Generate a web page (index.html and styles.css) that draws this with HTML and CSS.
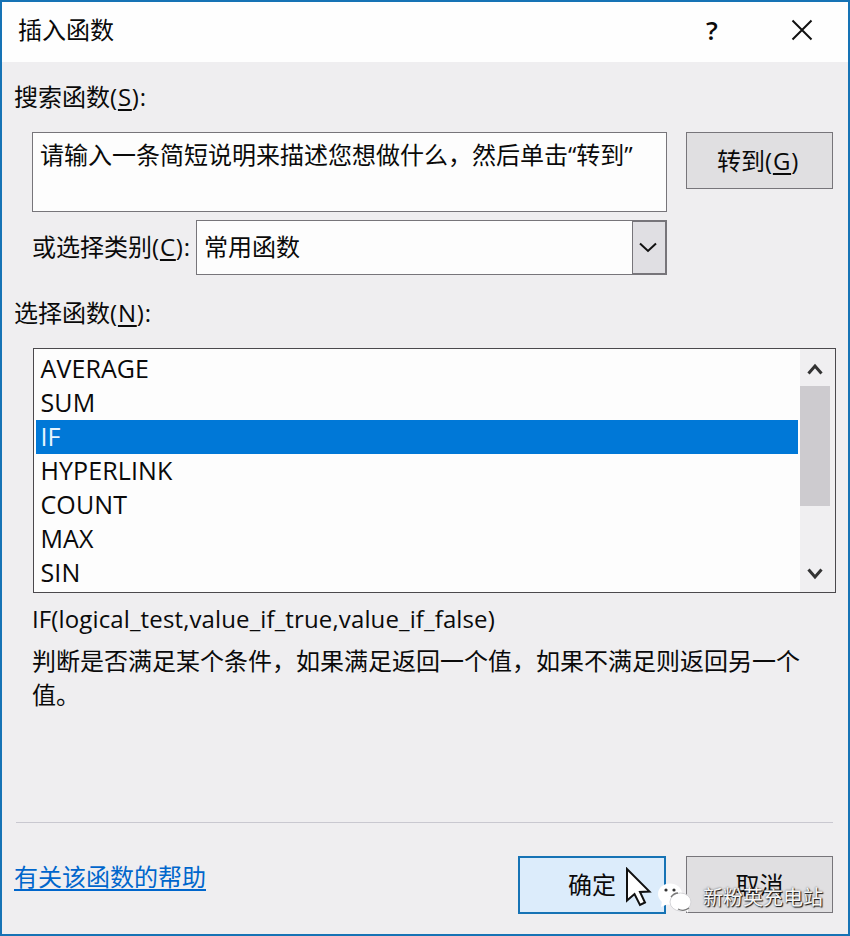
FILE: index.html
```
<!DOCTYPE html>
<html lang="zh-CN">
<head>
  <meta charset="UTF-8" />
  <title>插入函数</title>
  <link rel="stylesheet" href="styles.css">
</head>
<body>
  <div class="dialog">
    <div class="title-bar">
      <span class="title">插入函数</span>
      <span class="help">?</span>
      <svg class="close" width="22" height="22" viewBox="0 0 22 22">
        <path d="M1.5 1.5 L20.5 20.5 M20.5 1.5 L1.5 20.5" />
      </svg>
    </div>

    <div class="content">
      <div class="label">搜索函数<span class="key">(<u>S</u>):</span></div>

      <div class="search-row">
        <div class="search-box">请输入一条简短说明来描述您想做什么，然后单击“转到”</div>
        <div class="button go">转到<span class="key">(<u>G</u>)</span></div>
      </div>

      <div class="category-row">
        <div class="category-label">或选择类别<span class="key">(<u>C</u>):</span></div>
        <div class="select">
          <span class="select-value">常用函数</span>
          <span class="select-arrow">
            <svg width="18" height="11" viewBox="0 0 18 11"><path d="M1 1.5 L9 9 L17 1.5" /></svg>
          </span>
        </div>
      </div>

      <div class="label list-label">选择函数<span class="key">(<u>N</u>):</span></div>

      <div class="list">
        <ul class="items">
          <li>AVERAGE</li>
          <li>SUM</li>
          <li class="selected">IF</li>
          <li>HYPERLINK</li>
          <li>COUNT</li>
          <li>MAX</li>
          <li>SIN</li>
        </ul>
        <div class="scrollbar">
          <svg class="arrow" width="16" height="12" viewBox="0 0 16 12"><path d="M1.5 10.5 L8 3 L14.5 10.5" /></svg>
          <div class="thumb"></div>
          <svg class="arrow arrow-down" width="16" height="12" viewBox="0 0 16 12"><path d="M1.5 1.5 L8 9 L14.5 1.5" /></svg>
        </div>
      </div>

      <div class="syntax">IF(logical_test,value_if_true,value_if_false)</div>
      <div class="description">判断是否满足某个条件，如果满足返回一个值，如果不满足则返回另一个值。</div>

      <div class="footer">
        <a class="help-link" href="#">有关该函数的帮助</a>
        <div class="button ok">确定</div>
        <div class="button cancel">取消</div>
      </div>
    </div>

    <svg class="cursor" width="28" height="42" viewBox="0 0 28 42">
      <path d="M2 2 L2 33.5 L9.5 27 L15 38 L20 35.5 L15 25 L24.5 24.5 Z" />
    </svg>

    <div class="watermark">
      <svg width="36" height="32" viewBox="0 0 36 32">
        <ellipse cx="13" cy="12" rx="12" ry="10.5" />
        <path d="M5 19 L4 25 L11 22 Z" />
        <ellipse class="front" cx="23.5" cy="20" rx="10.5" ry="9" />
        <path d="M27 27 L31 31 L31 25 Z" />
        <circle class="eye" cx="9" cy="8" r="1.6" />
        <circle class="eye" cx="17" cy="8" r="1.6" />
        <path class="gap" d="M14 15 Q17 11 21 11" />
        <path class="gap" d="M21 27 Q27 30 32 26" />
      </svg>
      <span>新粉英充电站</span>
    </div>
  </div>
</body>
</html>
```

FILE: styles.css
```
* {
  box-sizing: border-box;
}
body {
  margin: 0;
  font-family: "Open Sans", "Noto Sans CJK SC", sans-serif;
  font-size: 24px;
  line-height: 34px;
  color: #0a0a0a;
}
u {
  text-decoration-thickness: 2px;
  text-underline-offset: 3px;
}
svg path {
  fill: none;
  stroke: #111;
  stroke-width: 2;
}
.dialog {
  position: relative;
  width: 850px;
  height: 936px;
  border: 2px solid #1673b5;
  background-color: #efeef0;
  overflow: hidden;
}
.title-bar {
  display: flex;
  align-items: center;
  height: 60px;
  padding: 0 35px 4px 16px;
  background-color: #fefefe;
}
.title {
  flex: 1;
}
.help {
  width: 14px;
  margin-right: 71px;
  font-size: 26px;
  font-weight: 600;
}
.content {
  display: flex;
  flex-direction: column;
  height: 872px;
  padding: 18px 13px 0 12px;
}
.key {
  letter-spacing: 0.8px;
}
.search-row {
  display: flex;
  align-items: flex-start;
  gap: 19px;
  margin: 18px 2px 0 18px;
}
.search-box {
  width: 635px;
  height: 80px;
  padding: 5px 7px;
  border: 1px solid #77757a;
  background-color: #fdfdfd;
  white-space: nowrap;
}
.button {
  display: flex;
  align-items: center;
  justify-content: center;
  width: 147px;
  height: 57px;
  border: 1px solid #77757a;
  background-color: #e0dfe1;
}
.go {
  padding-right: 3px;
}
.category-row {
  display: flex;
  margin: 8px 0 0 18px;
}
.category-label {
  width: 164px;
  padding-top: 10px;
  white-space: nowrap;
}
.select {
  display: flex;
  width: 471px;
  height: 55px;
  border: 1px solid #77757a;
  background-color: #fdfdfd;
}
.select-value {
  flex: 1;
  padding: 9px 7px;
}
.select-arrow {
  display: flex;
  align-items: center;
  justify-content: center;
  width: 34px;
  padding-right: 2px;
  border: 1px solid #77757a;
  background-color: #e0dfe3;
}
.list-label {
  margin-top: 21px;
}
.list {
  display: flex;
  width: 803px;
  height: 245px;
  margin: 18px 0 0 18.5px;
  border: 1px solid #4b494d;
  background-color: #fdfdfd;
}
.items {
  flex: 1;
  margin: 0;
  padding: 3px 2px 0;
  font-size: 25px;
  line-height: 32px;
  letter-spacing: 0.1px;
  list-style: none;
}
.items li {
  height: 34px;
  padding-left: 5px;
}
.items .selected {
  background-color: #0078d7;
  color: #e6f5ff;
}
.scrollbar {
  display: flex;
  flex-direction: column;
  align-items: flex-start;
  width: 35px;
  padding: 14px 0 12px;
  background-color: #f0eff1;
}
.arrow {
  margin-left: 7px;
}
.arrow path {
  stroke: #333;
  stroke-width: 3;
}
.thumb {
  width: 30px;
  height: 120px;
  margin-top: 11px;
  background-color: #cdcbcf;
}
.arrow-down {
  margin-top: auto;
}
.syntax {
  margin: 9px 0 0 18px;
  letter-spacing: 0.13px;
}
.description {
  width: 790px;
  margin: 8px 0 0 18px;
}
.footer {
  display: flex;
  align-items: flex-start;
  margin: 110px 2px 0 2px;
  padding-top: 33px;
  border-top: 1px solid #c9c8d0;
}
.help-link {
  margin: 4px auto 0 -2px;
  color: #0066cc;
  text-decoration-thickness: 2px;
  text-underline-offset: 3px;
}
.ok {
  width: 148px;
  height: 58px;
  margin-right: 20px;
  border: 2px solid #1673b5;
  background-color: #dcecfb;
}
.cursor {
  position: absolute;
  left: 623px;
  top: 865px;
}
.cursor path {
  fill: #fff;
  stroke-width: 2;
}
.watermark {
  position: absolute;
  left: 655px;
  top: 880px;
  display: flex;
  align-items: center;
  gap: 10px;
  font-size: 20px;
  line-height: 30px;
  color: #f7f7f7;
  text-shadow: 1px 1px 1px #111, 0 0 2px #555;
}
.watermark svg path {
  fill: #fff;
  stroke: none;
}
.watermark svg .gap {
  fill: none;
  stroke: #777;
  stroke-width: 1.3;
}
.watermark ellipse {
  fill: #fff;
}
.watermark .front {
  stroke: #d5d5d8;
  stroke-width: 1;
}
.watermark .eye {
  fill: #333;
}
```
